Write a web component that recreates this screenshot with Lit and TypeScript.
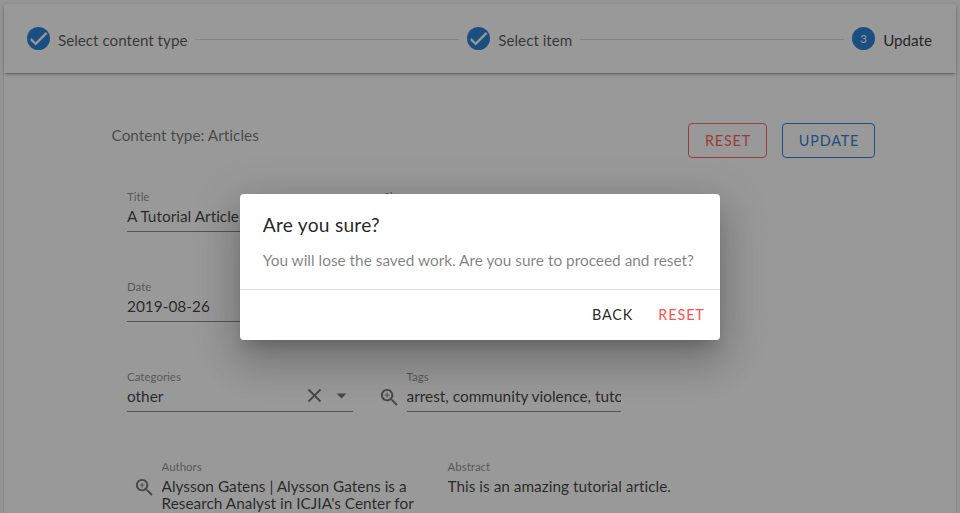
import { LitElement, html, css, nothing } from "lit";
import { customElement, property } from "lit/decorators.js";

const ZOOM_IN =
  "M15.5 14h-.79l-.28-.27C15.41 12.59 16 11.11 16 9.5 16 5.91 13.09 3 9.5 3S3 5.91 3 9.5 5.91 16 9.5 16c1.61 0 3.09-.59 4.23-1.57l.27.28v.79l5 4.99L20.49 19l-4.99-5zm-6 0C7.01 14 5 11.99 5 9.5S7.01 5 9.5 5 14 7.01 14 9.5 11.99 14 9.5 14zm.5-7H9v2H7v1h2v2h1v-2h2V9h-2z";
const CHECK = "M9 16.17L4.83 12l-1.42 1.41L9 19 21 7l-1.41-1.41z";
const CLOSE =
  "M19 6.41L17.59 5 12 10.59 6.41 5 5 6.41 10.59 12 5 17.59 6.41 19 12 13.41 17.59 19 19 17.59 13.41 12z";
const ARROW = "M7 10l5 5 5-5z";

const icon = (d: string) => html`<svg viewBox="0 0 24 24"><path d=${d} /></svg>`;

@customElement("app-step")
export class AppStep extends LitElement {
  @property() label = "";
  @property({ type: Number }) number = 1;
  @property({ type: Boolean }) complete = false;

  static styles = css`
    :host { display: flex; align-items: center; flex: none; color: rgba(0, 0, 0, 0.72); }
    :host([active]) { color: rgba(0, 0, 0, 0.87); }
    .badge {
      width: 23px; height: 23px; border-radius: 50%; background: #1976d2; color: #fff;
      display: flex; align-items: center; justify-content: center;
      font-size: 11.5px; margin-right: 8px;
    }
    svg { width: 23px; height: 23px; fill: #fff; stroke: #fff; stroke-width: 0.5; display: block; }
    .label { font-size: 15.2px; line-height: 20px; white-space: nowrap; padding-top: 2px; }
  `;

  render() {
    return html`<span class="badge">${this.complete ? icon(CHECK) : this.number}</span>
      <span class="label">${this.label}</span>`;
  }
}

@customElement("app-field")
export class AppField extends LitElement {
  @property() label = "";
  @property() value = "";
  @property({ type: Boolean }) lookup = false;
  @property({ type: Boolean }) select = false;
  @property({ type: Boolean }) area = false;

  static styles = css`
    :host { display: flex; min-width: 0; align-items: flex-start; }
    svg { display: block; fill: rgba(0, 0, 0, 0.6); width: 23px; height: 23px; }
    .prepend { flex: none; width: 23px; margin: 16px 6px 0 0; }
    .body { flex: 1; min-width: 0; }
    .label { font-size: 11.5px; line-height: 14px; height: 14px; color: rgba(0, 0, 0, 0.5); white-space: nowrap; }
    .control {
      display: flex; align-items: center; height: 27px;
      border-bottom: 1px solid rgba(0, 0, 0, 0.5);
    }
    .area { height: auto; border: 0; padding-top: 4px; }
    .value {
      flex: 1; min-width: 0; overflow: hidden; white-space: nowrap;
      font-size: 15.4px; line-height: 20px; color: rgba(0, 0, 0, 0.83);
      margin-top: -4px;
    }
    .area .value { white-space: pre-line; line-height: 17px; margin-top: 0; }
    .tools { display: flex; gap: 4px; margin-top: -4px; }
  `;

  render() {
    return html`
      ${this.lookup ? html`<span class="prepend">${icon(ZOOM_IN)}</span>` : nothing}
      <div class="body">
        <div class="label">${this.label}</div>
        <div class="control ${this.area ? "area" : ""}">
          <div class="value">${this.value}</div>
          ${this.select ? html`<div class="tools">${icon(CLOSE)}${icon(ARROW)}</div>` : nothing}
        </div>
      </div>
    `;
  }
}

@customElement("app-root")
export class AppRoot extends LitElement {
  static styles = css`
    :host {
      display: block; position: relative; height: 513px; overflow: hidden;
      background: #fafafa; font-family: Lato, sans-serif; color: rgba(0, 0, 0, 0.87);
      font-variant-ligatures: none;
    }
    * { box-sizing: border-box; }
    .page { padding: 4px 4px 0; height: 100%; }
    .card {
      height: 540px; background: #fff; border-radius: 4px;
      box-shadow: 0 3px 1px -2px rgba(0, 0, 0, 0.2), 0 2px 2px rgba(0, 0, 0, 0.14), 0 1px 5px rgba(0, 0, 0, 0.12);
    }
    .steps {
      height: 69px; display: flex; align-items: center; padding: 0 24px 0 23px;
      box-shadow: 0 3px 1px -2px rgba(0, 0, 0, 0.2), 0 2px 2px rgba(0, 0, 0, 0.14), 0 1px 5px rgba(0, 0, 0, 0.12);
      border-radius: 4px 4px 0 0;
    }
    .line { flex: 1; height: 1px; background: rgba(0, 0, 0, 0.14); margin: 1px 8px 0; }
    .content { padding: 50px 81px 0 107.5px; }
    .top { display: flex; height: 35px; }
    .type { flex: 1; font-size: 15.4px; line-height: 24px; color: rgba(0, 0, 0, 0.6); }
    .actions { display: flex; gap: 15px; }
    .outlined {
      height: 35px; border: 1px solid currentColor; border-radius: 4px; background: none;
      font: 400 14.4px Lato, sans-serif; letter-spacing: 0.85px; padding: 0 0 0 1px;
    }
    .red { color: #ff5252; width: 79px; }
    .blue { color: #1976d2; width: 93px; }
    .form { padding: 32px 0 0 15.5px; }
    .row { display: grid; grid-template-columns: 226px 243.5px; column-gap: 24.5px; height: 90px; }
    .inset { padding-left: 6px; }
    .wide { grid-template-columns: 287px 300px; column-gap: 28px; padding-left: 5.5px; }
    .overlay {
      position: absolute; inset: 0; background: rgba(33, 33, 33, 0.46);
      display: flex; align-items: center; justify-content: center;
    }
    .dialog {
      width: 480px; height: 146px; margin: 21px 0.5px 0 0; background: #fff; border-radius: 4px;
      box-shadow: 0 11px 15px -7px rgba(0, 0, 0, 0.2), 0 24px 38px 3px rgba(0, 0, 0, 0.14), 0 9px 46px 8px rgba(0, 0, 0, 0.12);
    }
    .message { height: 96px; padding: 16px 23px 0; border-bottom: 1px solid rgba(0, 0, 0, 0.12); }
    .title { font-size: 19.2px; line-height: 30px; letter-spacing: 0.24px; }
    .text { font-size: 15.38px; line-height: 22px; margin-top: 9px; color: rgba(0, 0, 0, 0.5); white-space: nowrap; }
    .buttons { display: flex; justify-content: flex-end; align-items: center; height: 49px; padding-right: 15px; gap: 25px; }
    .flat { border: 0; background: none; padding: 0; font: 400 14.4px Lato, sans-serif; letter-spacing: 0.9px; color: rgba(0, 0, 0, 0.87); }
    .flat.danger { color: #ff5252; }
  `;

  render() {
    return html`
      <div class="page">
        <div class="card">
          <div class="steps">
            <app-step complete label="Select content type"></app-step>
            <span class="line"></span>
            <app-step complete label="Select item"></app-step>
            <span class="line"></span>
            <app-step active .number=${3} label="Update"></app-step>
          </div>
          <div class="content">
            <div class="top">
              <div class="type">Content type: Articles</div>
              <div class="actions">
                <button class="outlined red">RESET</button>
                <button class="outlined blue">UPDATE</button>
              </div>
            </div>
            <div class="form">
              <div class="row">
                <app-field label="Title" value="A Tutorial Article"></app-field>
                <app-field class="inset" label="Slug" value=""></app-field>
              </div>
              <div class="row">
                <app-field label="Date" value="2019-08-26"></app-field>
              </div>
              <div class="row">
                <app-field label="Categories" value="other" select></app-field>
                <app-field label="Tags" value="arrest, community violence, tutorial" lookup></app-field>
              </div>
              <div class="row wide">
                <app-field
                  label="Authors"
                  .value=${"Alysson Gatens | Alysson Gatens is a\nResearch Analyst in ICJIA's Center for"}
                  lookup
                  area
                ></app-field>
                <app-field label="Abstract" value="This is an amazing tutorial article." area></app-field>
              </div>
            </div>
          </div>
        </div>
      </div>
      <div class="overlay">
        <div class="dialog" role="dialog">
          <div class="message">
            <div class="title">Are you sure?</div>
            <div class="text">You will lose the saved work. Are you sure to proceed and reset?</div>
          </div>
          <div class="buttons">
            <button class="flat">BACK</button>
            <button class="flat danger">RESET</button>
          </div>
        </div>
      </div>
    `;
  }
}
